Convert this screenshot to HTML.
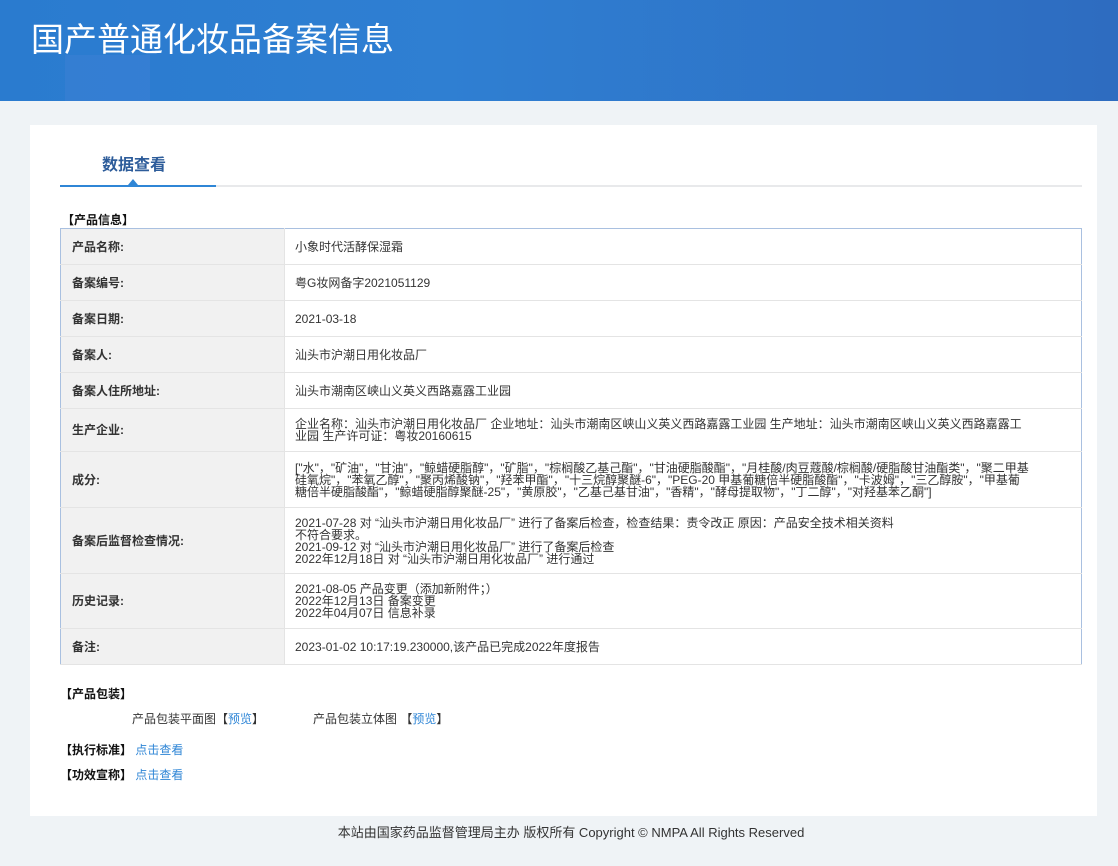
<!DOCTYPE html>
<html><head><meta charset="utf-8"><style>
*{margin:0;padding:0;box-sizing:border-box}
body{width:1118px;height:866px;background:#eff3f6;font-family:"Liberation Sans","Noto Sans CJK SC",sans-serif;font-size:12px;color:#333;position:relative;overflow:hidden}
.hd{position:absolute;left:0;top:0;width:1118px;height:101px;background:linear-gradient(90deg,#2a7bcf 0%,#2f7fd2 40%,#2e6cc0 100%);overflow:hidden}
.hd h1{position:absolute;left:31px;top:13px;color:#fff;font-size:33px;font-weight:normal;font-family:"Noto Sans CJK SC",sans-serif}
.c1{position:absolute;left:65px;top:55px;width:85px;height:60px;background:rgba(80,130,220,.25)}
.card{position:absolute;left:30px;top:125px;width:1067px;height:691px;background:#fff}
.tab{position:absolute;left:102px;top:151px;font-size:16px;font-weight:bold;color:#2d5c9a}
.line{position:absolute;left:60px;top:185px;width:1022px;height:2px;background:#e8e9eb}
.line i{position:absolute;left:0;top:0;width:156px;height:2px;background:#2f86d6}
.tri{position:absolute;left:128px;top:179px;width:0;height:0;border-left:5px solid transparent;border-right:5px solid transparent;border-bottom:6px solid #2f86d6}
.sec{position:absolute;font-weight:bold;color:#111}
table{position:absolute;left:60px;top:228px;width:1022px;border-collapse:collapse;border:1px solid #a9c0e0}
td{border-bottom:1px solid #e4e4e4;vertical-align:middle;line-height:12px}
td.l{width:224px;background:#f1f1f1;padding-left:11px;font-weight:bold;color:#333;border-right:1px solid #e4e4e4}
td.v{padding:0 50px 0 10px;color:#333}
a{color:#2f86d6;text-decoration:none}
.ft{position:absolute;left:0;width:1142px;top:822px;text-align:center;color:#333;font-size:13px}
</style></head><body>
<div class="hd"><div class="c1"></div><h1>国产普通化妆品备案信息</h1></div>
<div class="card"></div>
<div class="tab">数据查看</div>
<div class="line"><i></i></div><div class="tri"></div>
<div class="sec" style="left:62px;top:211px">【产品信息】</div>
<table>
<tr style="height:36px"><td class="l">产品名称:</td><td class="v">小象时代活酵保湿霜</td></tr>
<tr style="height:36px"><td class="l">备案编号:</td><td class="v">粤G妆网备字2021051129</td></tr>
<tr style="height:36px"><td class="l">备案日期:</td><td class="v">2021-03-18</td></tr>
<tr style="height:36px"><td class="l">备案人:</td><td class="v">汕头市沪潮日用化妆品厂</td></tr>
<tr style="height:36px"><td class="l">备案人住所地址:</td><td class="v">汕头市潮南区峡山义英义西路嘉露工业园</td></tr>
<tr style="height:43px"><td class="l">生产企业:</td><td class="v">企业名称：汕头市沪潮日用化妆品厂 企业地址：汕头市潮南区峡山义英义西路嘉露工业园 生产地址：汕头市潮南区峡山义英义西路嘉露工业园 生产许可证：粤妆20160615</td></tr>
<tr style="height:56px"><td class="l">成分:</td><td class="v">["水"，"矿油"，"甘油"，"鲸蜡硬脂醇"，"矿脂"，"棕榈酸乙基己酯"，"甘油硬脂酸酯"，"月桂酸/肉豆蔻酸/棕榈酸/硬脂酸甘油酯类"，"聚二甲基硅氧烷"，"苯氧乙醇"，"聚丙烯酸钠"，"羟苯甲酯"，"十三烷醇聚醚-6"，"PEG-20 甲基葡糖倍半硬脂酸酯"，"卡波姆"，"三乙醇胺"，"甲基葡糖倍半硬脂酸酯"，"鲸蜡硬脂醇聚醚-25"，"黄原胶"，"乙基己基甘油"，"香精"，"酵母提取物"，"丁二醇"，"对羟基苯乙酮"]</td></tr>
<tr style="height:66px"><td class="l">备案后监督检查情况:</td><td class="v">2021-07-28 对 “汕头市沪潮日用化妆品厂” 进行了备案后检查，检查结果：责令改正 原因：产品安全技术相关资料<br>不符合要求。<br>2021-09-12 对 “汕头市沪潮日用化妆品厂” 进行了备案后检查<br>2022年12月18日 对 “汕头市沪潮日用化妆品厂” 进行通过</td></tr>
<tr style="height:55px"><td class="l">历史记录:</td><td class="v">2021-08-05 产品变更（添加新附件；）<br>2022年12月13日 备案变更<br>2022年04月07日 信息补录</td></tr>
<tr style="height:36px"><td class="l">备注:</td><td class="v">2023-01-02 10:17:19.230000,该产品已完成2022年度报告</td></tr>
</table>
<div class="sec" style="left:60px;top:685px">【产品包装】</div>
<div style="position:absolute;left:132px;top:710px">产品包装平面图【<a>预览</a>】</div>
<div style="position:absolute;left:313px;top:710px">产品包装立体图 【<a>预览</a>】</div>
<div style="position:absolute;left:60px;top:741px"><b style="color:#111">【执行标准】</b> <a>点击查看</a></div>
<div style="position:absolute;left:60px;top:766px"><b style="color:#111">【功效宣称】</b> <a>点击查看</a></div>
<div class="ft">本站由国家药品监督管理局主办 版权所有 Copyright © NMPA All Rights Reserved</div>
</body></html>
